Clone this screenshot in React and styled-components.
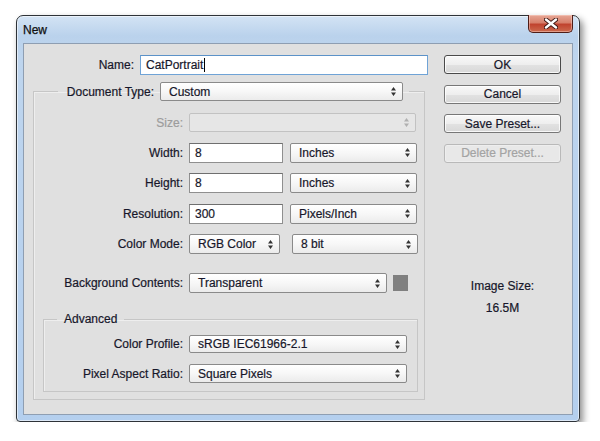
import styled, { createGlobalStyle } from "styled-components";

const GlobalStyle = createGlobalStyle`
  body {
    margin: 0;
    background: #ffffff;
    font-family: "Liberation Sans", Arial, sans-serif;
  }
`;

function Arrows({ disabled }) {
  return (
    <StyledArrows width="5" height="9" viewBox="0 0 5 9" disabled={disabled}>
      <path d="M0 3.5 L2.5 0 L5 3.5 Z M0 5.5 L2.5 9 L5 5.5 Z" />
    </StyledArrows>
  );
}

function Select({ value, width, height = 20, disabled }) {
  return (
    <StyledSelect width={width} height={height} disabled={disabled}>
      <span>{value}</span>
      <Arrows disabled={disabled} />
    </StyledSelect>
  );
}

function Row({ label, labelWidth, disabled, children }) {
  return (
    <StyledRow>
      <StyledLabel labelWidth={labelWidth} disabled={disabled}>
        {label}
      </StyledLabel>
      {children}
    </StyledRow>
  );
}

export default function App() {
  return (
    <>
      <GlobalStyle />
      <StyledPage>
        <StyledWindow>
          <StyledTitleBar>
            <StyledTitle>New</StyledTitle>
            <StyledClose>
              <svg width="14" height="11" viewBox="0 0 14 11">
                <path
                  d="M2 1.5 L12 9.5 M12 1.5 L2 9.5"
                  stroke="#3a1410"
                  strokeWidth="4.2"
                  strokeLinecap="round"
                />
                <path
                  d="M2 1.5 L12 9.5 M12 1.5 L2 9.5"
                  stroke="#ffffff"
                  strokeWidth="2.4"
                  strokeLinecap="round"
                />
              </svg>
            </StyledClose>
          </StyledTitleBar>
          <StyledContent>
            <StyledLeft>
              <StyledRow>
                <StyledLabel labelWidth={101}>Name:</StyledLabel>
                <StyledInput width={288} focused>
                  CatPortrait
                  <StyledCaret />
                </StyledInput>
              </StyledRow>

              <StyledGroup>
                <StyledLegend>
                  <StyledLegendRow>
                    <StyledLabel labelWidth={90}>Document Type:</StyledLabel>
                    <Select value="Custom" width={243} height={19} />
                  </StyledLegendRow>
                </StyledLegend>

                <StyledStack>
                  <Row label="Size:" labelWidth={149} disabled>
                    <Select value="" width={227} height={19} disabled />
                  </Row>
                  <Row label="Width:" labelWidth={149}>
                    <StyledInput width={94}>8</StyledInput>
                    <StyledSpacer size={7} />
                    <Select value="Inches" width={127} />
                  </Row>
                  <Row label="Height:" labelWidth={149}>
                    <StyledInput width={94}>8</StyledInput>
                    <StyledSpacer size={7} />
                    <Select value="Inches" width={127} />
                  </Row>
                  <Row label="Resolution:" labelWidth={149}>
                    <StyledInput width={94}>300</StyledInput>
                    <StyledSpacer size={7} />
                    <Select value="Pixels/Inch" width={127} />
                  </Row>
                  <Row label="Color Mode:" labelWidth={149}>
                    <Select value="RGB Color" width={91} />
                    <StyledSpacer size={12} />
                    <Select value="8 bit" width={126} />
                  </Row>
                </StyledStack>

                <StyledBgRow>
                  <Row label="Background Contents:" labelWidth={149}>
                    <Select value="Transparent" width={198} />
                    <StyledSwatch />
                  </Row>
                </StyledBgRow>

                <StyledInnerGroup>
                  <StyledInnerLegend>Advanced</StyledInnerLegend>
                  <StyledInnerStack>
                    <Row label="Color Profile:" labelWidth={139}>
                      <Select value="sRGB IEC61966-2.1" width={218} height={18} />
                    </Row>
                    <Row label="Pixel Aspect Ratio:" labelWidth={139}>
                      <Select value="Square Pixels" width={218} height={19} />
                    </Row>
                  </StyledInnerStack>
                </StyledInnerGroup>
              </StyledGroup>
            </StyledLeft>

            <StyledRight>
              <StyledButtons>
                <StyledButton primary>OK</StyledButton>
                <StyledButton>Cancel</StyledButton>
                <StyledButton>Save Preset...</StyledButton>
                <StyledButton disabled>Delete Preset...</StyledButton>
              </StyledButtons>
              <StyledInfo>
                <span>Image Size:</span>
                <span>16.5M</span>
              </StyledInfo>
            </StyledRight>
          </StyledContent>
        </StyledWindow>
      </StyledPage>
    </>
  );
}

const StyledPage = styled.div`
  padding: 15px 0 0 16px;
`;

const StyledWindow = styled.div`
  box-sizing: border-box;
  width: 564px;
  height: 407px;
  display: flex;
  flex-direction: column;
  padding: 0 6px 6px;
  border: 1px solid #2e3338;
  border-radius: 7px 7px 4px 4px;
  background: linear-gradient(
    180deg,
    #d3e3f4 0px,
    #bad2ec 20px,
    #bed5ee 40px,
    #b4cfee 100%
  );
  box-shadow: inset 0 0 0 1px rgba(255, 255, 255, 0.55),
    3px 4px 7px rgba(0, 0, 0, 0.45);
`;

const StyledTitleBar = styled.div`
  height: 27px;
  display: flex;
  justify-content: space-between;
  align-items: flex-start;
`;

const StyledTitle = styled.span`
  align-self: center;
  font-size: 12px;
  color: #101010;
  -webkit-text-stroke: 0.25px #101010;
`;

const StyledClose = styled.div`
  width: 45px;
  height: 18px;
  margin-top: -1px;
  display: flex;
  align-items: center;
  justify-content: center;
  box-sizing: border-box;
  border: 1px solid #4e1d17;
  border-top: none;
  border-radius: 0 0 5px 5px;
  background: linear-gradient(
    180deg,
    #e7a796 0%,
    #d7806c 45%,
    #c0432f 55%,
    #cc6a4e 100%
  );
  box-shadow: inset 0 0 0 1px rgba(255, 220, 210, 0.45);
`;

const StyledContent = styled.div`
  flex: 1;
  display: flex;
  box-sizing: border-box;
  padding: 11px 11px 0 9px;
  background: #e0e0e0;
  border: 1px solid #8e9eb2;
  color: #17172a;
  font-size: 12px;
  -webkit-text-stroke: 0.2px currentColor;
`;

const StyledLeft = styled.div`
  width: 395px;
  display: flex;
  flex-direction: column;
`;

const StyledRight = styled.div`
  width: 117px;
  margin-left: 16px;
  display: flex;
  flex-direction: column;
`;

const StyledRow = styled.div`
  display: flex;
  align-items: center;
`;

const StyledLabel = styled.span`
  width: ${(props) => props.labelWidth}px;
  margin-right: 6px;
  text-align: right;
  white-space: nowrap;
  color: ${(props) => (props.disabled ? "#9c9c9c" : "#17172a")};
`;

const StyledInput = styled.div`
  box-sizing: border-box;
  width: ${(props) => props.width}px;
  height: 20px;
  padding: 0 5px;
  display: flex;
  align-items: center;
  background: #ffffff;
  border: 1px solid ${(props) => (props.focused ? "#6fa3d6" : "#8f8f8f")};
  border-top-color: ${(props) => (props.focused ? "#5c92c8" : "#6f6f6f")};
  white-space: nowrap;
`;

const StyledCaret = styled.span`
  width: 1px;
  height: 14px;
  margin-left: 1px;
  background: #000000;
`;

const StyledSelect = styled.div`
  box-sizing: border-box;
  width: ${(props) => props.width}px;
  height: ${(props) => props.height}px;
  padding: 0 6px 0 8px;
  display: flex;
  align-items: center;
  justify-content: space-between;
  border: 1px solid ${(props) => (props.disabled ? "#c2c2c2" : "#8a8a8a")};
  border-radius: 2px;
  background: ${(props) =>
    props.disabled
      ? "#e6e6e6"
      : "linear-gradient(180deg, #ffffff 0%, #f7f7f7 50%, #ebebeb 100%)"};
  white-space: nowrap;
`;

const StyledArrows = styled.svg`
  flex-shrink: 0;
  fill: ${(props) => (props.disabled ? "#b0b0b0" : "#333333")};
`;

const StyledSpacer = styled.span`
  width: ${(props) => props.size}px;
  flex-shrink: 0;
`;

const StyledSwatch = styled.span`
  width: 15px;
  height: 16px;
  margin-left: 6px;
  background: #808080;
`;

const StyledGroup = styled.fieldset`
  width: 392px;
  box-sizing: border-box;
  margin: 7px 0 0;
  padding: 12px 6px 7px 9px;
  border: 1px solid #c6c6c6;
  box-shadow: inset 1px 1px 0 #eeeeee;
  min-width: 0;
`;

const StyledLegend = styled.legend`
  margin-left: 15px;
  padding: 0 6px;
`;

const StyledLegendRow = styled.div`
  display: flex;
  align-items: center;
  height: 19px;
`;

const StyledStack = styled.div`
  display: flex;
  flex-direction: column;
  gap: 10.5px;
  margin-left: -9px;
`;

const StyledBgRow = styled.div`
  margin: 19px 0 0 -9px;
`;

const StyledInnerGroup = styled.fieldset`
  box-sizing: border-box;
  width: 375px;
  margin: 19px 0 0;
  padding: 9px 0 8px;
  border: 1px solid #c6c6c6;
  box-shadow: inset 1px 1px 0 #eeeeee;
  min-width: 0;
`;

const StyledInnerLegend = styled.legend`
  margin-left: 13px;
  padding: 0 7px;
  line-height: 14px;
`;

const StyledInnerStack = styled.div`
  display: flex;
  flex-direction: column;
  gap: 11px;
`;

const StyledButtons = styled.div`
  display: flex;
  flex-direction: column;
  gap: 10.5px;
`;

const StyledButton = styled.div`
  box-sizing: border-box;
  height: 19px;
  display: flex;
  align-items: center;
  justify-content: center;
  border-radius: 3px;
  border: 1px solid
    ${(props) =>
      props.primary ? "#4a4a4a" : props.disabled ? "#b9b9b9" : "#777777"};
  background: ${(props) =>
    props.disabled
      ? "#e8e8e8"
      : "linear-gradient(180deg, #f8f8f8 0%, #eeeeee 50%, #e2e2e2 51%, #d8d8d8 100%)"};
  box-shadow: inset 0 0 0 1px
    ${(props) => (props.disabled ? "#eeeeee" : "rgba(255, 255, 255, 0.8)")};
  color: ${(props) => (props.disabled ? "#a3a3a3" : "#17172a")};
  white-space: nowrap;
`;

const StyledInfo = styled.div`
  margin-top: 116px;
  display: flex;
  flex-direction: column;
  align-items: center;
  gap: 8px;
  line-height: 14px;
`;
